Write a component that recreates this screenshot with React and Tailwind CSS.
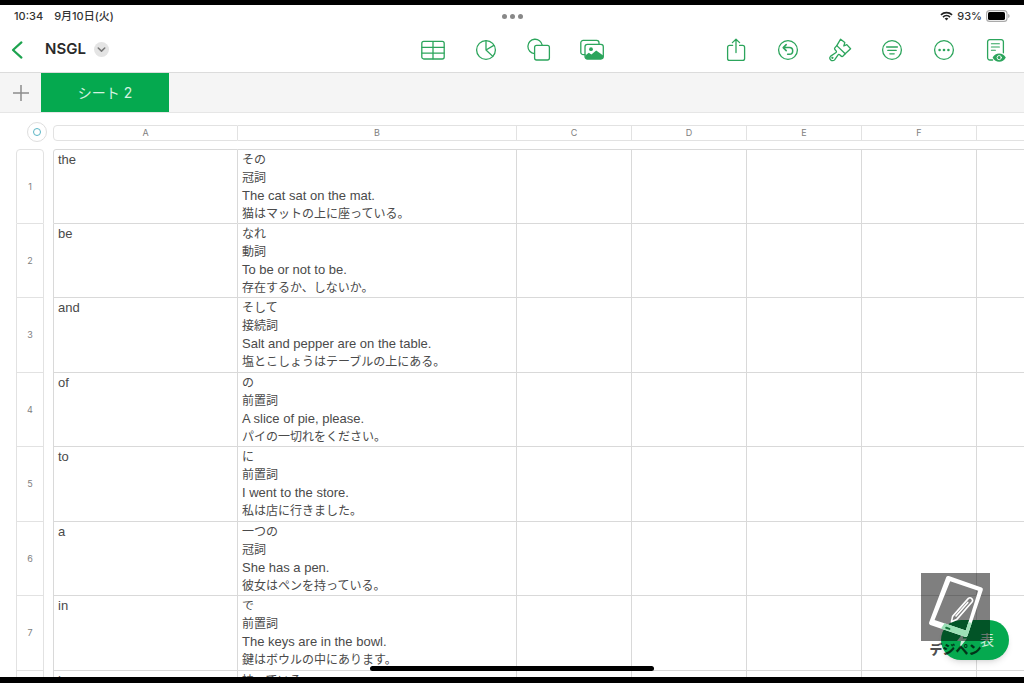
import React, { useState } from 'react';

// the last column runs to the window edge and has no letter of its own
const columns = ['A', 'B', 'C', 'D', 'E', 'F', ''];

const words = [
  { word: 'the', lines: ['その', '冠詞', 'The cat sat on the mat.', '猫はマットの上に座っている。'] },
  { word: 'be', lines: ['なれ', '動詞', 'To be or not to be.', '存在するか、しないか。'] },
  { word: 'and', lines: ['そして', '接続詞', 'Salt and pepper are on the table.', '塩とこしょうはテーブルの上にある。'] },
  { word: 'of', lines: ['の', '前置詞', 'A slice of pie, please.', 'パイの一切れをください。'] },
  { word: 'to', lines: ['に', '前置詞', 'I went to the store.', '私は店に行きました。'] },
  { word: 'a', lines: ['一つの', '冠詞', 'She has a pen.', '彼女はペンを持っている。'] },
  { word: 'in', lines: ['で', '前置詞', 'The keys are in the bowl.', '鍵はボウルの中にあります。'] },
  { word: 'have', lines: ['持っている'] },
];

const isLatin = (text) => /^[A-Za-z]/.test(text);

const Icon = ({ children }) => (
  <svg viewBox="0 0 24 24" className="w-6 h-6" fill="none" stroke="currentColor" strokeWidth="1.3" strokeLinecap="round" strokeLinejoin="round">
    {children}
  </svg>
);

const insertTools = [
  {
    label: 'Table',
    icon: (
      <Icon>
        <rect x="0.8" y="3.4" width="22.4" height="17.6" rx="2" />
        <path d="M1 9.3h22M1 15.1h22M12 3.6v17.2" />
      </Icon>
    ),
  },
  {
    label: 'Chart',
    icon: (
      <Icon>
        <circle cx="12" cy="12" r="9.4" />
        <path d="M12 2.8V12l6.8 6.4M12 12l7.8-4.6" />
      </Icon>
    ),
  },
  {
    label: 'Shape',
    icon: (
      <Icon>
        <path d="M7.4 15.6A7.2 7.2 0 1 1 15.2 7.200" />
        <rect x="7.6" y="7.4" width="14.8" height="14.6" rx="2" />
      </Icon>
    ),
  },
  {
    label: 'Media',
    icon: (
      <Icon>
        <path d="M5 16.6H3.2a2.4 2.4 0 0 1-2.4-2.4V4.8a2.4 2.4 0 0 1 2.4-2.4h13.4a2.4 2.4 0 0 1 2.4 2.4v1.4" />
        <rect x="5" y="6.4" width="18.3" height="14.6" rx="2.4" />
        <circle cx="11" cy="11.2" r="1.9" fill="currentColor" stroke="none" />
        <path d="M5.2 17.6l3.6-2.8 2.6 1.8 4.8-4.2 7 5.2v1.2a2.2 2.2 0 0 1-2.2 2.2H7.400a2.200 2.200 0 0 1-2.200-2.200z" fill="currentColor" stroke="none" />
      </Icon>
    ),
  },
];

const docTools = [
  {
    label: 'Share',
    icon: (
      <Icon>
        <path d="M8.6 7.4h-3a2 2 0 0 0-2 2v11a2 2 0 0 0 2 2h13a2 2 0 0 0 2-2v-11a2 2 0 0 0-2-2h-3M12 14.5V1.4M8.4 4.600L12 1.200l3.600 3.400" />
      </Icon>
    ),
  },
  {
    label: 'Undo',
    icon: (
      <Icon>
        <circle cx="12" cy="12" r="9.4" />
        <path d="M10.2 6.6l-3 3 3 3M7.4 9.600h6a3.300 3.300 0 0 1 0 6.600h-1.800" strokeWidth="1.500" />
      </Icon>
    ),
  },
  {
    label: 'Format',
    icon: (
      <Icon>
        <path d="M12.6 1.200l4.200 3.400-1 3.400 3-1.400 3.800 4.200-5.400 5-8.400-8.200z" />
        <path d="M8.800 7.600L7 9.600c-.8.900-.5 1.600.3 2.400l.8.900c.6.700.4 1.300-.4 1.800l-5 3.400a2.700 2.700 0 1 0 3.900 3.800l3.300-4.800c.6-.8 1.200-.9 1.800-.3l1 1c.8.800 1.600 1 2.400.2l2.100-2.200" />
        <circle cx="4.4" cy="19.8" r="0.5" fill="currentColor" />
      </Icon>
    ),
  },
  {
    label: 'Organize',
    icon: (
      <Icon>
        <circle cx="12" cy="12" r="9.4" />
        <path d="M6.600 9h10.800M7.800 12.400h8.400M9.800 15.800h4.400" />
      </Icon>
    ),
  },
  {
    label: 'More',
    icon: (
      <Icon>
        <circle cx="12" cy="12" r="9.4" />
        <g fill="currentColor" stroke="none">
          <circle cx="7.6" cy="12" r="1.3" />
          <circle cx="12" cy="12" r="1.3" />
          <circle cx="16.4" cy="12" r="1.3" />
        </g>
      </Icon>
    ),
  },
  {
    label: 'Reading view',
    icon: (
      <Icon>
        <path d="M8.600 22H5.800a2.200 2.200 0 0 1-2.200-2.200V3.800a2.200 2.200 0 0 1 2.200-2.200h11.400a2.200 2.200 0 0 1 2.200 2.200v11" />
        <path d="M7.400 5.800h8M7.400 9h8M7.400 12.200h4" strokeWidth="1.100" />
        <path d="M8.600 19.600c1.600-2.900 3.800-4.200 6.600-4.200s5 1.300 6.600 4.200c-1.600 2.900-3.800 4.200-6.600 4.200s-5-1.300-6.600-4.200z" fill="currentColor" stroke="none" />
        <circle cx="15.200" cy="19.600" r="2.100" stroke="white" strokeWidth="0.900" />
      </Icon>
    ),
  },
];

const StatusBar = () => (
  <div className="grid grid-cols-[1fr_auto_1fr] items-center h-[22px] px-[14px] text-[11px] font-medium text-[#333]">
    <div className="flex gap-[11px]">
      <span>10:34</span>
      <span>9月10日(火)</span>
    </div>
    <div className="flex gap-[3px]">
      <i className="w-[5px] h-[5px] rounded-full bg-[#888]" />
      <i className="w-[5px] h-[5px] rounded-full bg-[#888]" />
      <i className="w-[5px] h-[5px] rounded-full bg-[#888]" />
    </div>
    <div className="flex justify-end items-center gap-1">
      <svg viewBox="0 0 14 10" className="w-[13px] h-[10px]" fill="none" stroke="#222" strokeWidth="1.7">
        <path d="M1 3.800a8.600 8.600 0 0 1 12 0M3.200 6.200a5.400 5.400 0 0 1 7.600 0" />
        <path d="M5 7.800a2.900 2.900 0 0 1 4 0L7 9.900z" fill="#222" stroke="none" />
      </svg>
      <span>93%</span>
      <svg viewBox="0 0 24 12" className="w-6 h-3">
        <rect x="0.6" y="0.6" width="20.4" height="10.8" rx="3" fill="none" stroke="#aaa" strokeWidth="1.1" />
        <rect x="2" y="2" width="17" height="8" rx="1.6" fill="#000" />
        <path d="M22.200 4v4c1-.4 1.400-1.200 1.400-2s-.4-1.600-1.400-2z" fill="#aaa" />
      </svg>
    </div>
  </div>
);

const Toolbar = () => (
  <header className="grid grid-cols-[1fr_auto_1fr] items-center h-[46px] border-b border-[#dcdcdc]">
    <div className="flex items-center pl-[10px]">
      <button type="button" aria-label="Back" className="text-[#1da34f]">
        <svg viewBox="0 0 14 20" className="w-[14px] h-5" fill="none" stroke="currentColor" strokeWidth="2.2" strokeLinecap="round" strokeLinejoin="round">
          <path d="M11.400 2.400L3 10l8.400 7.600" />
        </svg>
      </button>
      <button type="button" className="flex items-center gap-2 ml-[21px] text-[15px] font-semibold text-[#2a2a2a]">
        NSGL
        <span className="flex items-center justify-center w-[15px] h-[15px] rounded-full bg-[#e4e4e4]">
          <svg viewBox="0 0 10 10" className="w-[9px] h-[9px]" fill="none" stroke="#777" strokeWidth="1.7" strokeLinecap="round" strokeLinejoin="round">
            <path d="M1.400 3.400L5 6.800l3.600-3.400" />
          </svg>
        </span>
      </button>
    </div>
    <div className="flex gap-[29px] text-[#2ca55c]">
      {insertTools.map((tool) => (
        <button key={tool.label} type="button" aria-label={tool.label}>{tool.icon}</button>
      ))}
    </div>
    <div className="flex justify-end gap-7 pr-4 text-[#2ca55c]">
      {docTools.map((tool) => (
        <button key={tool.label} type="button" aria-label={tool.label}>{tool.icon}</button>
      ))}
    </div>
  </header>
);

const SheetTabs = ({ active, onSelect }) => (
  <nav className="flex h-10 bg-[#f5f5f5] border-b border-[#e6e6e6]">
    <button type="button" aria-label="Add sheet" className="flex items-center justify-center w-[41px] text-[#8c8c8c]">
      <svg viewBox="0 0 16 16" className="w-4 h-4" stroke="currentColor" strokeWidth="1.5">
        <path d="M8 0v16M0 8h16" />
      </svg>
    </button>
    {['シート 2'].map((name) => (
      <button
        key={name}
        type="button"
        onClick={() => onSelect(name)}
        className={`w-32 text-sm ${active === name ? 'bg-[#05a94f] text-[#d5f2e0]' : 'text-[#555]'}`}
      >
        {name}
      </button>
    ))}
  </nav>
);

const Sheet = () => (
  <table className="table-fixed w-full border-separate border-spacing-0 text-[#4a4a4a]">
    <colgroup>
      <col className="w-[28px]" />
      <col className="w-[9px]" />
      <col className="w-[185px]" />
      <col className="w-[279px]" />
      <col className="w-[115px]" />
      <col className="w-[115px]" />
      <col className="w-[115px]" />
      <col className="w-[115px]" />
      <col />
    </colgroup>
    <thead>
      <tr className="h-4 text-[9px] leading-[14px] text-[#808080]">
        <td colSpan={2} className="relative p-0">
          <button
            type="button"
            aria-label="Select table"
            className="absolute -top-[3px] right-1.5 flex items-center justify-center w-5 h-5 rounded-full bg-white border border-[#dedede]"
          >
            <i className="w-2 h-2 rounded-full border border-[#5bb5c5]" />
          </button>
        </td>
        {columns.map((name) => (
          <th key={name} scope="col" className="p-0 font-normal border-y border-r border-[#e2e2e2] first-of-type:border-l first-of-type:rounded-l-[4px] last:border-r-0">
            {name}
          </th>
        ))}
      </tr>
      <tr className="h-2" aria-hidden="true">
        <td colSpan={9} className="p-0" />
      </tr>
    </thead>
    <tbody>
      {words.map((row, i) => (
        <tr key={row.word} className="group odd:h-[75px] even:h-[74px] align-top text-xs leading-[18px]">
          <th
            scope="row"
            className="p-0 align-middle text-[9px] font-normal text-[#808080] border-x border-b border-[#e2e2e2] group-first:border-t group-first:rounded-t-[4px]"
          >
            {i + 1}
          </th>
          <td className="p-0" />
          <td className="px-1 pt-px pb-0 text-[13px] font-['Liberation_Sans',sans-serif] border-x border-b border-[#d9d9d9] group-first:border-t group-first:rounded-tl-[3px]">
            {row.word}
          </td>
          <td className="px-1 pt-px pb-0 border-r border-b border-[#d9d9d9] group-first:border-t whitespace-nowrap">
            {row.lines.map((line) => (
              <p key={line} className={isLatin(line) ? "text-[13px] leading-[18px] font-['Liberation_Sans',sans-serif]" : ''}>{line}</p>
            ))}
          </td>
          {columns.slice(2).map((name) => (
            <td key={name} className="p-0 border-r border-b border-[#d9d9d9] group-first:border-t last:border-r-0" />
          ))}
        </tr>
      ))}
    </tbody>
  </table>
);

const Watermark = () => (
  <div className="absolute bottom-[20px] right-[34px] w-[69px] pointer-events-none">
    <div className="bg-black/50">
      <svg viewBox="0 0 69 68" className="w-full h-auto" fill="none">
        <path
          fillRule="evenodd"
          fill="white"
          d="M27.800 3.100L60.600 14.400q1.800.7 1.200 2.600L46.600 62.400q-.7 2-2.700 1.400L9.300 52q-1.800-.7-1.200-2.500L25.200 4.300q.8-1.900 2.600-1.200zM29.200 8.200L13.600 47l31.200 10.400L57.200 17.800z"
        />
        <path fill="#9be0b6" d="M23.600 50.300l21.200 7.100 2.600-8.400 3.400 1-4.200 12.400q-.7 2-2.700 1.400L20 55.600z" />
        <path d="M25.200 54.800l3.200 1.100" stroke="#12753a" strokeWidth="2" strokeLinecap="round" />
        <path
          d="M47.400 25.400L31.600 43.400l-1.200 5.400 5.200-2.200 15.600-17.800a2.600 2.600 0 0 0-3.800-3.400zM35 43L46.800 29.400"
          stroke="white"
          strokeWidth="1.600"
          strokeLinejoin="round"
          strokeLinecap="round"
        />
      </svg>
    </div>
    <p className="text-center text-[13px] leading-4 font-black text-black/70">デジペン</p>
  </div>
);

function App() {
  const [activeSheet, setActiveSheet] = useState('シート 2');

  return (
    <div className="h-screen py-[5px] bg-black font-['Inter','Noto_Sans_CJK_JP',sans-serif]">
      <div className="relative flex flex-col h-full bg-white overflow-hidden border-b border-black">
        <StatusBar />
        <Toolbar />
        <SheetTabs active={activeSheet} onSelect={setActiveSheet} />
        <main className="flex-1 min-h-0 overflow-hidden pt-3 pl-4">
          <Sheet />
        </main>

        <button
          type="button"
          className="absolute bottom-[17px] right-[15px] flex items-center justify-center gap-3 w-[68px] h-10 rounded-full bg-[#05a94f] text-sm text-white/80 shadow-md"
        >
          <svg viewBox="0 0 12 16" className="w-3 h-4" fill="currentColor">
            <path d="M8 0L1 9h4l-1.400 7L11 6.600H6.800z" />
          </svg>
          表
        </button>
        <Watermark />
        <div className="absolute bottom-[6px] left-1/2 -translate-x-1/2 w-[284px] h-[5px] rounded-full bg-black" />
      </div>
    </div>
  );
}

export default App;
